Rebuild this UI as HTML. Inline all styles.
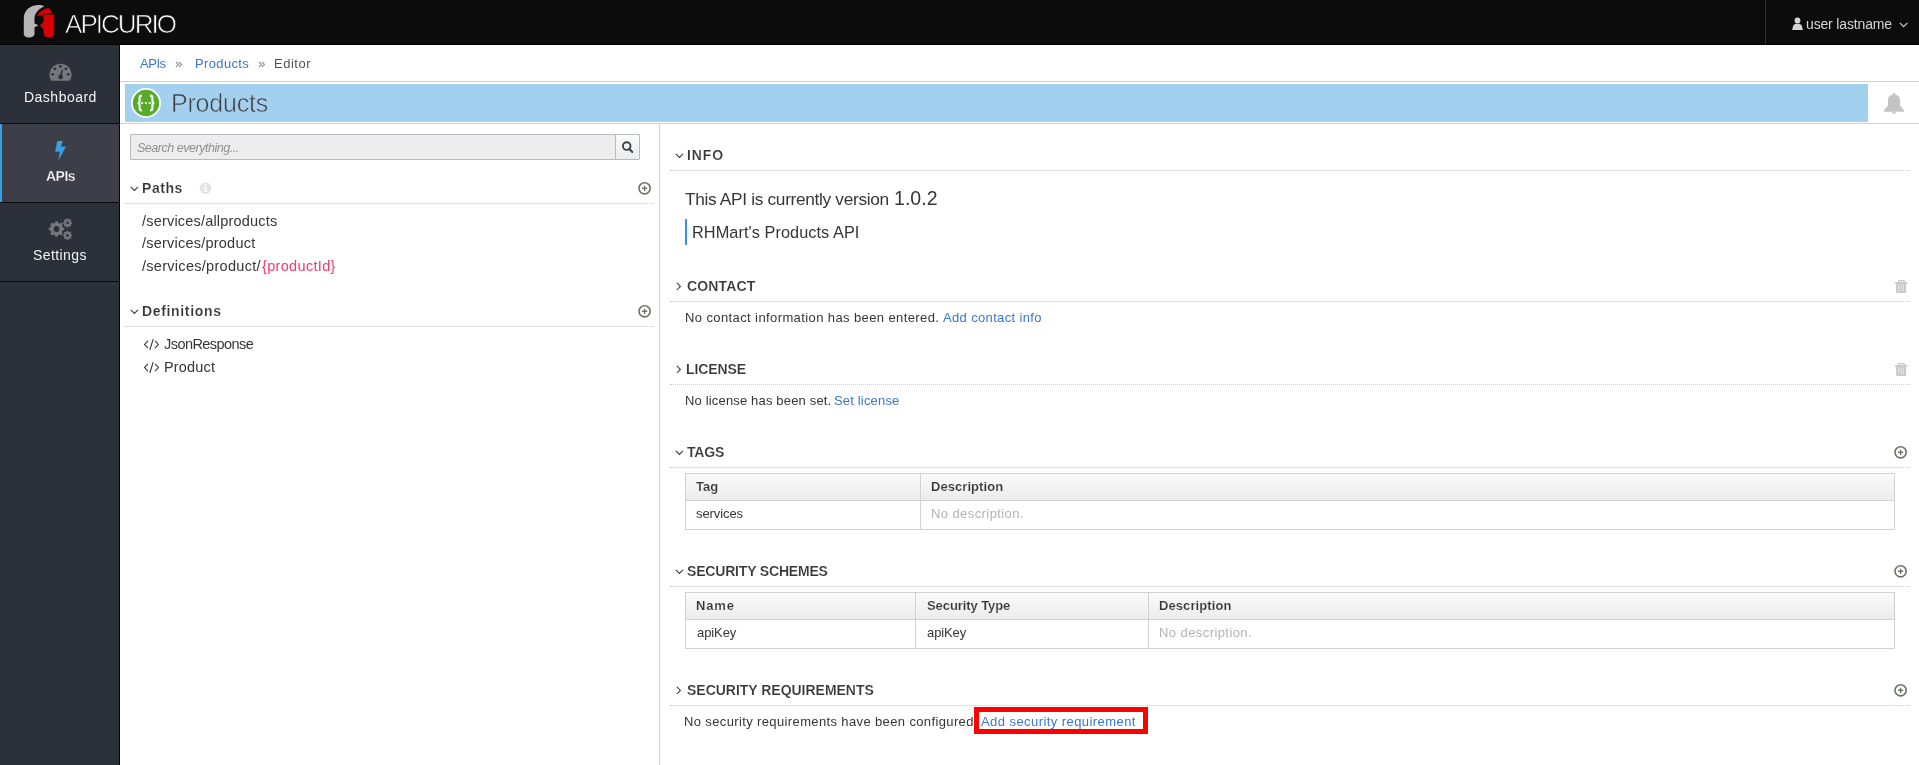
<!DOCTYPE html>
<html><head><meta charset="utf-8">
<style>
*{box-sizing:border-box;margin:0;padding:0}
html,body{width:1919px;height:765px;overflow:hidden;background:#fff;font-family:"Liberation Sans",sans-serif}
.a{position:absolute}
.t{position:absolute;white-space:nowrap;will-change:transform}
#hdr{position:absolute;left:0;top:0;width:1919px;height:45px;background:#0c0c0c}
#side{position:absolute;left:0;top:45px;width:119px;height:720px;background:#2c3039}
.dot{position:absolute;height:1px;background-image:linear-gradient(to right,#cdcdcd 50%,transparent 50%);background-size:2px 1px}
</style></head><body>

<div id="hdr"></div>
<div class="a" style="left:0;top:44px;width:1919px;height:1px;background:#000"></div>
<svg class="a" style="left:15px;top:0px" width="50" height="45" viewBox="0 0 50 45">
  <path d="M8.8 34 L8.8 18.5 C8.8 10.5 15 5 23.5 5 C26 5 28 5.4 29.6 6.3 C24.5 8.3 20.2 12.5 19.5 17.8 L19.5 23.5 L23.6 25.2 L19.5 27.3 L19.5 34 C19.5 38.6 8.8 38.6 8.8 34 Z" fill="#b6b6b6"/>
  <path d="M28.7 14.6 L39.2 14.6 L39.2 34 C39.2 38.6 28.7 38.6 28.7 34 L28.7 29.6 L24.8 25.6 L28 22 Z" fill="#d70000"/>
  <path d="M21.6 16.2 C24.5 11.5 29 8.8 33.2 8.1 C35 9.3 36.5 11 37.3 12.8 C32.5 12.6 27.5 14 23.5 17.3 Z" fill="#d70000"/>
  <circle cx="24.4" cy="19.8" r="4.3" fill="#0c0c0c"/>
</svg>
<div class="a" style="left:1765px;top:0;width:1px;height:45px;background:#2e2e2e"></div>
<svg class="a" style="left:1792px;top:17px" width="12" height="14" viewBox="0 0 12 14"><circle cx="5.5" cy="3.5" r="2.9" fill="#d6d6d6"/><path d="M0.1 13 L1.3 8.6 C1.8 7.3 3.2 6.8 5.5 6.8 C7.8 6.8 9.2 7.3 9.7 8.6 L10.9 13 Z" fill="#d6d6d6"/></svg>
<svg class="a" style="left:1899px;top:22px" width="10" height="6" viewBox="0 0 10 6"><path d="M0.8 0.8 L4.6 4.6 L8.4 0.8" stroke="#c8c8c8" stroke-width="1.2" fill="none"/></svg>

<div id="side"></div>
<div class="a" style="left:119px;top:45px;width:1px;height:720px;background:#070707"></div>
<svg class="a" style="left:49px;top:62px" width="23" height="20" viewBox="0 0 23 20">
 <path d="M2.27 18.7 A11.05 11.05 0 1 1 20.83 18.7 Z" fill="#76777c"/>
 <g fill="#2c3039"><circle cx="11.4" cy="4.4" r="1.4"/><circle cx="5.9" cy="6.8" r="1.4"/><circle cx="16.9" cy="6.8" r="1.4"/><circle cx="3.6" cy="12.3" r="1.4"/><circle cx="19.3" cy="12.3" r="1.4"/><circle cx="11.6" cy="15" r="2.35"/><path d="M10.6 14.6 L12.9 7.2 L13.9 7.5 L12.6 15 Z"/></g>
</svg>
<div class="a" style="left:0;top:123px;width:119px;height:1px;background:#0b0b0b"></div>
<div class="a" style="left:0;top:124px;width:119px;height:78px;background:#3c3f48"></div>
<div class="a" style="left:0;top:124px;width:2px;height:78px;background:#3a9fe4"></div>
<svg class="a" style="left:54px;top:140px" width="13" height="22" viewBox="0 0 13 22"><path d="M3.3 0.9 L8.7 0.9 L7 6.6 L11.9 6.4 L4.4 20.7 L5.8 11.5 L1.1 11.7 Z" fill="#3a9fe4"/></svg>
<div class="a" style="left:0;top:202px;width:119px;height:1px;background:#0b0b0b"></div>
<svg class="a" style="left:44px;top:214px" width="32" height="30" viewBox="44 214 32 30">
 <g fill="#76777c">
  <circle cx="56.5" cy="229" r="6.3"/>
  <g stroke="#76777c" stroke-width="2.6">
   <path d="M56.5 221.2 V236.8 M48.7 229 H64.3 M51 223.5 L62 234.5 M62 223.5 L51 234.5"/>
  </g>
  <circle cx="67.5" cy="222.8" r="3.4"/>
  <g stroke="#76777c" stroke-width="1.8"><path d="M67.5 218.2 V227.4 M62.9 222.8 H72.1 M64.3 219.6 L70.7 226 M70.7 219.6 L64.3 226"/></g>
  <circle cx="67.5" cy="235.4" r="3.4"/>
  <g stroke="#76777c" stroke-width="1.8"><path d="M67.5 230.8 V240 M62.9 235.4 H72.1 M64.3 232.2 L70.7 238.6 M70.7 232.2 L64.3 238.6"/></g>
 </g>
 <g fill="#2c3039"><circle cx="56.5" cy="229" r="2.9"/><circle cx="67.5" cy="222.8" r="1.4"/><circle cx="67.5" cy="235.4" r="1.4"/></g>
</svg>
<div class="a" style="left:0;top:281px;width:119px;height:1px;background:#0b0b0b"></div>

<svg class="a" style="left:175px;top:61px" width="8" height="8" viewBox="0 0 8 8"><path d="M1 1 L3.5 3.5 L1 6 M4 1 L6.5 3.5 L4 6" stroke="#959595" stroke-width="1.15" fill="none"/></svg>
<svg class="a" style="left:258px;top:61px" width="8" height="8" viewBox="0 0 8 8"><path d="M1 1 L3.5 3.5 L1 6 M4 1 L6.5 3.5 L4 6" stroke="#959595" stroke-width="1.15" fill="none"/></svg>
<div class="a" style="left:120px;top:81px;width:1799px;height:1px;background:#d1d1d1"></div>
<div class="a" style="left:125px;top:84px;width:1743px;height:38px;background:#a3d0ef"></div>
<svg class="a" style="left:130px;top:87px" width="32" height="32" viewBox="0 0 32 32">
 <circle cx="16" cy="16" r="15" fill="#fff"/><circle cx="16" cy="16" r="13.2" fill="#57ab2a"/>
 <g stroke="#fff" stroke-width="2.05" fill="none" stroke-linecap="butt">
  <path d="M12 8.6 C10.2 8.6 9.6 9.3 9.6 10.8 L9.6 13.8 C9.6 15.2 8.9 16 7.6 16 C8.9 16 9.6 16.8 9.6 18.2 L9.6 21.2 C9.6 22.7 10.2 23.4 12 23.4"/>
  <path d="M20 8.6 C21.8 8.6 22.4 9.3 22.4 10.8 L22.4 13.8 C22.4 15.2 23.1 16 24.4 16 C23.1 16 22.4 16.8 22.4 18.2 L22.4 21.2 C22.4 22.7 21.8 23.4 20 23.4"/>
 </g>
 <g fill="#fff"><rect x="11.2" y="15.1" width="1.9" height="1.9"/><rect x="14.9" y="15.1" width="1.9" height="1.9"/><rect x="18.7" y="15.1" width="1.9" height="1.9"/></g>
</svg>
<svg class="a" style="left:1883px;top:92px" width="22" height="24" viewBox="0 0 22 24"><rect x="10" y="1" width="2" height="2.5" fill="#c4c4c4"/><path d="M11 2.6 C7.4 2.6 5 4.8 5 8.2 L5 13.6 L1 18.2 L1 19.7 L21 19.7 L21 18.2 L17 13.6 L17 8.2 C17 4.8 14.6 2.6 11 2.6 Z" fill="#c4c4c4"/><path d="M8.6 20.2 A2.5 2.5 0 0 0 13.4 20.2 Z" fill="#c4c4c4"/></svg>
<div class="a" style="left:120px;top:123px;width:1799px;height:1px;background:#d1d1d1"></div>

<div class="a" style="left:659px;top:124px;width:1px;height:641px;background:#d1d1d1"></div>
<div class="a" style="left:130px;top:134px;width:486px;height:26px;background:#ededed;border:1px solid #b7bbbf;border-radius:1px 0 0 1px"></div>
<div class="a" style="left:615px;top:134px;width:25px;height:26px;background:linear-gradient(#fafafa,#ececec);border:1px solid #b7bbbf;border-radius:0 1px 1px 0"></div>
<svg class="a" style="left:620px;top:139px" width="15" height="16" viewBox="0 0 15 16"><circle cx="6.7" cy="7.1" r="3.8" stroke="#3d424b" stroke-width="1.9" fill="none"/><path d="M9.4 9.9 L12.3 12.9" stroke="#3d424b" stroke-width="2.1" stroke-linecap="round"/></svg>

<svg class="a" style="left:130px;top:186px" width="9" height="6" viewBox="0 0 9 6"><path d="M0.8 0.8 L4.4 4.4 L8 0.8" stroke="#363636" stroke-width="1.05" fill="none"/></svg>
<svg class="a" style="left:199px;top:182px" width="13" height="13" viewBox="0 0 13 13"><circle cx="6.5" cy="6.2" r="5.8" fill="#e3e3e3"/><rect x="5.6" y="5.2" width="1.9" height="4.8" fill="#fff"/><rect x="4.8" y="9" width="3.4" height="1" fill="#fff"/><circle cx="6.5" cy="3.3" r="1.1" fill="#fff"/></svg>
<svg class="a" style="left:638px;top:181px" width="14" height="15" viewBox="0 0 14 15"><circle cx="6.6" cy="7.3" r="5.6" stroke="#6b7565" stroke-width="1.6" fill="none"/><path d="M6.6 4.7 V9.9 M4 7.3 H9.2" stroke="#6b7565" stroke-width="1.4"/></svg>
<div class="dot" style="left:125px;top:203px;width:529px"></div>
<svg class="a" style="left:130px;top:309px" width="9" height="6" viewBox="0 0 9 6"><path d="M0.8 0.8 L4.4 4.4 L8 0.8" stroke="#363636" stroke-width="1.05" fill="none"/></svg>
<svg class="a" style="left:638px;top:304px" width="14" height="15" viewBox="0 0 14 15"><circle cx="6.6" cy="7.3" r="5.6" stroke="#6b7565" stroke-width="1.6" fill="none"/><path d="M6.6 4.7 V9.9 M4 7.3 H9.2" stroke="#6b7565" stroke-width="1.4"/></svg>
<div class="dot" style="left:125px;top:326px;width:529px"></div>
<svg class="a" style="left:144px;top:339px" width="15" height="12" viewBox="0 0 15 12"><path d="M4 1.8 L0.6 5.5 L4 9.2 M11 1.8 L14.4 5.5 L11 9.2 M9.2 0.2 L5.8 11" stroke="#363636" stroke-width="1.1" fill="none"/></svg>
<svg class="a" style="left:144px;top:362px" width="15" height="12" viewBox="0 0 15 12"><path d="M4 1.8 L0.6 5.5 L4 9.2 M11 1.8 L14.4 5.5 L11 9.2 M9.2 0.2 L5.8 11" stroke="#363636" stroke-width="1.1" fill="none"/></svg>

<svg class="a" style="left:675px;top:153px" width="9" height="6" viewBox="0 0 9 6"><path d="M0.8 0.8 L4.4 4.4 L8 0.8" stroke="#363636" stroke-width="1.05" fill="none"/></svg>
<div class="a" style="left:670px;top:170px;width:1px;height:1px;background:#cfcfcf"></div><div class="dot" style="left:671px;top:170px;width:1240px"></div>
<div class="a" style="left:685px;top:219px;width:2px;height:26px;background:#3b8fe6"></div>

<svg class="a" style="left:676px;top:282px" width="6" height="9" viewBox="0 0 6 9"><path d="M0.8 0.8 L4.4 4.4 L0.8 8" stroke="#363636" stroke-width="1.05" fill="none"/></svg>
<svg class="a" style="left:1895px;top:280px" width="13" height="14" viewBox="0 0 13 14"><path d="M3.8 2.4 V0.7 H9.2 V2.4" stroke="#c8c8c8" stroke-width="1.2" fill="none"/><rect x="0.2" y="2" width="12" height="1.8" fill="#c8c8c8"/><path d="M1.1 3.6 H11.1 V11.6 Q11.1 12.9 9.9 12.9 H2.3 Q1.1 12.9 1.1 11.6 Z" fill="#c8c8c8"/><rect x="3.3" y="4.6" width="0.9" height="6.8" fill="#e8e8e8"/><rect x="5.6" y="4.6" width="0.9" height="6.8" fill="#e8e8e8"/><rect x="7.9" y="4.6" width="0.9" height="6.8" fill="#e8e8e8"/></svg>
<div class="a" style="left:670px;top:301px;width:1px;height:1px;background:#cfcfcf"></div><div class="dot" style="left:671px;top:301px;width:1240px"></div>

<svg class="a" style="left:676px;top:365px" width="6" height="9" viewBox="0 0 6 9"><path d="M0.8 0.8 L4.4 4.4 L0.8 8" stroke="#363636" stroke-width="1.05" fill="none"/></svg>
<svg class="a" style="left:1895px;top:363px" width="13" height="14" viewBox="0 0 13 14"><path d="M3.8 2.4 V0.7 H9.2 V2.4" stroke="#c8c8c8" stroke-width="1.2" fill="none"/><rect x="0.2" y="2" width="12" height="1.8" fill="#c8c8c8"/><path d="M1.1 3.6 H11.1 V11.6 Q11.1 12.9 9.9 12.9 H2.3 Q1.1 12.9 1.1 11.6 Z" fill="#c8c8c8"/><rect x="3.3" y="4.6" width="0.9" height="6.8" fill="#e8e8e8"/><rect x="5.6" y="4.6" width="0.9" height="6.8" fill="#e8e8e8"/><rect x="7.9" y="4.6" width="0.9" height="6.8" fill="#e8e8e8"/></svg>
<div class="a" style="left:670px;top:384px;width:1px;height:1px;background:#cfcfcf"></div><div class="dot" style="left:671px;top:384px;width:1240px"></div>

<svg class="a" style="left:675px;top:450px" width="9" height="6" viewBox="0 0 9 6"><path d="M0.8 0.8 L4.4 4.4 L8 0.8" stroke="#363636" stroke-width="1.05" fill="none"/></svg>
<svg class="a" style="left:1894px;top:445px" width="14" height="15" viewBox="0 0 14 15"><circle cx="6.6" cy="7.3" r="5.6" stroke="#6b7565" stroke-width="1.6" fill="none"/><path d="M6.6 4.7 V9.9 M4 7.3 H9.2" stroke="#6b7565" stroke-width="1.4"/></svg>
<div class="a" style="left:670px;top:467px;width:1px;height:1px;background:#cfcfcf"></div><div class="dot" style="left:671px;top:467px;width:1240px"></div>
<div class="a" style="left:685px;top:473px;width:1210px;height:57px;border:1px solid #d1d1d1"></div>
<div class="a" style="left:686px;top:474px;width:1208px;height:26px;background:linear-gradient(#fafafa,#ececec)"></div>
<div class="a" style="left:686px;top:500px;width:1208px;height:1px;background:#d1d1d1"></div>
<div class="a" style="left:920px;top:474px;width:1px;height:55px;background:#d1d1d1"></div>

<svg class="a" style="left:675px;top:569px" width="9" height="6" viewBox="0 0 9 6"><path d="M0.8 0.8 L4.4 4.4 L8 0.8" stroke="#363636" stroke-width="1.05" fill="none"/></svg>
<svg class="a" style="left:1894px;top:564px" width="14" height="15" viewBox="0 0 14 15"><circle cx="6.6" cy="7.3" r="5.6" stroke="#6b7565" stroke-width="1.6" fill="none"/><path d="M6.6 4.7 V9.9 M4 7.3 H9.2" stroke="#6b7565" stroke-width="1.4"/></svg>
<div class="a" style="left:670px;top:586px;width:1px;height:1px;background:#cfcfcf"></div><div class="dot" style="left:671px;top:586px;width:1240px"></div>
<div class="a" style="left:685px;top:592px;width:1210px;height:57px;border:1px solid #d1d1d1"></div>
<div class="a" style="left:686px;top:593px;width:1208px;height:26px;background:linear-gradient(#fafafa,#ececec)"></div>
<div class="a" style="left:686px;top:619px;width:1208px;height:1px;background:#d1d1d1"></div>
<div class="a" style="left:915px;top:593px;width:1px;height:55px;background:#d1d1d1"></div>
<div class="a" style="left:1148px;top:593px;width:1px;height:55px;background:#d1d1d1"></div>

<svg class="a" style="left:676px;top:686px" width="6" height="9" viewBox="0 0 6 9"><path d="M0.8 0.8 L4.4 4.4 L0.8 8" stroke="#363636" stroke-width="1.05" fill="none"/></svg>
<svg class="a" style="left:1894px;top:683px" width="14" height="15" viewBox="0 0 14 15"><circle cx="6.6" cy="7.3" r="5.6" stroke="#6b7565" stroke-width="1.6" fill="none"/><path d="M6.6 4.7 V9.9 M4 7.3 H9.2" stroke="#6b7565" stroke-width="1.4"/></svg>
<div class="a" style="left:670px;top:705px;width:1px;height:1px;background:#cfcfcf"></div><div class="dot" style="left:671px;top:705px;width:1240px"></div>
<div class="a" style="left:974px;top:707px;width:174px;height:27px;border:5px solid #ff0000"></div>

<div class="t" style="left:65.1px;top:10.9px;font-size:26px;line-height:26px;color:#ffffff;letter-spacing:-1.957px;-webkit-text-stroke:0.7px #0c0c0c">APICURIO</div>
<div class="t" style="left:1805.8px;top:17px;font-size:14px;line-height:14px;color:#d6d6d6;letter-spacing:-0.15px">user lastname</div>
<div class="t" style="left:24px;top:89.9px;font-size:14px;line-height:14px;color:#f2f2f2;letter-spacing:0.488px">Dashboard</div>
<div class="t" style="left:45.6px;top:168.7px;font-size:14px;line-height:14px;color:#ffffff;font-weight:bold;letter-spacing:-0.5px;-webkit-text-stroke:0.3px #3c3f48">APIs</div>
<div class="t" style="left:33.4px;top:248px;font-size:14px;line-height:14px;color:#f2f2f2;letter-spacing:0.4px">Settings</div>
<div class="t" style="left:140px;top:56.8px;font-size:13px;line-height:13px;color:#3b76cc;letter-spacing:-0.467px">APIs</div>
<div class="t" style="left:194.8px;top:56.8px;font-size:13px;line-height:13px;color:#3b76cc;letter-spacing:0.357px">Products</div>
<div class="t" style="left:274px;top:56.8px;font-size:13px;line-height:13px;color:#4d5258;letter-spacing:0.52px">Editor</div>
<div class="t" style="left:171.3px;top:91.2px;font-size:25px;line-height:25px;color:#3f3f3f;letter-spacing:-0.214px;-webkit-text-stroke:0.6px #a3d0ef">Products</div>
<div class="t" style="left:137.3px;top:141.9px;font-size:12.5px;line-height:12.5px;color:#8f9194;font-style:italic;letter-spacing:-0.474px">Search everything...</div>
<div class="t" style="left:141.9px;top:180.9px;font-size:14px;line-height:14px;color:#363636;font-weight:bold;letter-spacing:0.55px;-webkit-text-stroke:0.15px #ffffff">Paths</div>
<div class="t" style="left:142px;top:213.8px;font-size:14.5px;line-height:14.5px;color:#363636;letter-spacing:0.195px">/services/allproducts</div>
<div class="t" style="left:142px;top:236.4px;font-size:14.5px;line-height:14.5px;color:#363636;letter-spacing:0.225px">/services/product</div>
<div class="t" style="left:142px;top:259.1px;font-size:14.5px;line-height:14.5px;color:#363636;letter-spacing:0.288px">/services/product/</div>
<div class="t" style="left:261.8px;top:259.1px;font-size:14.5px;line-height:14.5px;color:#ee3d6a;letter-spacing:0.33px">{productId}</div>
<div class="t" style="left:141.8px;top:303.9px;font-size:14px;line-height:14px;color:#363636;font-weight:bold;letter-spacing:0.66px;-webkit-text-stroke:0.15px #ffffff">Definitions</div>
<div class="t" style="left:163.5px;top:337px;font-size:14.5px;line-height:14.5px;color:#363636;letter-spacing:-0.555px">JsonResponse</div>
<div class="t" style="left:163.7px;top:359.8px;font-size:14.5px;line-height:14.5px;color:#363636;letter-spacing:0.167px">Product</div>
<div class="t" style="left:686.5px;top:148px;font-size:14px;line-height:14px;color:#363636;font-weight:bold;letter-spacing:0.9px;-webkit-text-stroke:0.15px #ffffff">INFO</div>
<div class="t" style="left:685.3px;top:191.1px;font-size:17.3px;line-height:17.3px;color:#363636;letter-spacing:-0.325px">This API is currently version</div>
<div class="t" style="left:893.6px;top:189.1px;font-size:19.5px;line-height:19.5px;color:#363636;letter-spacing:0.05px">1.0.2</div>
<div class="t" style="left:692px;top:223.9px;font-size:16.3px;line-height:16.3px;color:#363636;letter-spacing:0.07px">RHMart's Products API</div>
<div class="t" style="left:687.1px;top:279px;font-size:14px;line-height:14px;color:#363636;font-weight:bold;letter-spacing:0.15px;-webkit-text-stroke:0.15px #ffffff">CONTACT</div>
<div class="t" style="left:684.8px;top:310.8px;font-size:13px;line-height:13px;color:#363636;letter-spacing:0.397px">No contact information has been entered.</div>
<div class="t" style="left:942.7px;top:310.8px;font-size:13px;line-height:13px;color:#3b76cc;letter-spacing:0.347px">Add contact info</div>
<div class="t" style="left:686.0px;top:362px;font-size:14px;line-height:14px;color:#363636;font-weight:bold;letter-spacing:-0.083px;-webkit-text-stroke:0.15px #ffffff">LICENSE</div>
<div class="t" style="left:684.5px;top:393.8px;font-size:13px;line-height:13px;color:#363636;letter-spacing:0.165px">No license has been set.</div>
<div class="t" style="left:833.7px;top:393.8px;font-size:13px;line-height:13px;color:#3b76cc;letter-spacing:0.17px">Set license</div>
<div class="t" style="left:687.0px;top:444.8px;font-size:14px;line-height:14px;color:#363636;font-weight:bold;letter-spacing:-0.2px;-webkit-text-stroke:0.15px #ffffff">TAGS</div>
<div class="t" style="left:696.4px;top:479.9px;font-size:13px;line-height:13px;color:#363636;font-weight:bold;-webkit-text-stroke:0.15px #f3f3f3">Tag</div>
<div class="t" style="left:930.7px;top:479.7px;font-size:13px;line-height:13px;color:#363636;font-weight:bold;letter-spacing:0.06px;-webkit-text-stroke:0.15px #f3f3f3">Description</div>
<div class="t" style="left:696.4px;top:506.9px;font-size:13px;line-height:13px;color:#363636;letter-spacing:-0.086px">services</div>
<div class="t" style="left:930.7px;top:506.8px;font-size:13px;line-height:13px;color:#b3b3b3;letter-spacing:0.414px">No description.</div>
<div class="t" style="left:687.0px;top:563.8px;font-size:14px;line-height:14px;color:#363636;font-weight:bold;letter-spacing:-0.18px;-webkit-text-stroke:0.15px #ffffff">SECURITY SCHEMES</div>
<div class="t" style="left:695.5px;top:599.1px;font-size:13px;line-height:13px;color:#363636;font-weight:bold;letter-spacing:0.833px;-webkit-text-stroke:0.15px #f3f3f3">Name</div>
<div class="t" style="left:926.5px;top:599.1px;font-size:13px;line-height:13px;color:#363636;font-weight:bold;letter-spacing:-0.083px;-webkit-text-stroke:0.15px #f3f3f3">Security Type</div>
<div class="t" style="left:1158.6px;top:598.9px;font-size:13px;line-height:13px;color:#363636;font-weight:bold;letter-spacing:0.09px;-webkit-text-stroke:0.15px #f3f3f3">Description</div>
<div class="t" style="left:696.5px;top:625.8px;font-size:13px;line-height:13px;color:#363636;letter-spacing:-0.08px">apiKey</div>
<div class="t" style="left:926.5px;top:625.8px;font-size:13px;line-height:13px;color:#363636;letter-spacing:-0.1px">apiKey</div>
<div class="t" style="left:1158.6px;top:625.8px;font-size:13px;line-height:13px;color:#b3b3b3;letter-spacing:0.421px">No description.</div>
<div class="t" style="left:687.0px;top:683.4px;font-size:14px;line-height:14px;color:#363636;font-weight:bold;letter-spacing:-0.02px;-webkit-text-stroke:0.15px #ffffff">SECURITY REQUIREMENTS</div>
<div class="t" style="left:684px;top:714.9px;font-size:13px;line-height:13px;color:#363636;letter-spacing:0.37px">No security requirements have been configured</div>
<div class="t" style="left:981.2px;top:714.9px;font-size:13px;line-height:13px;color:#3b76cc;letter-spacing:0.43px">Add security requirement</div>
</body></html>
